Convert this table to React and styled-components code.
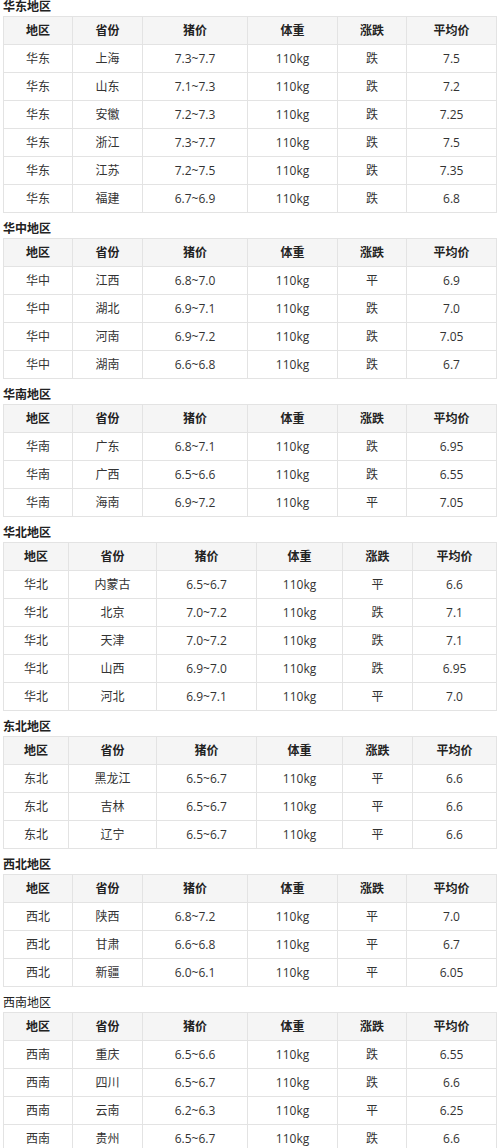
import React from "react";
import styled, { createGlobalStyle } from "styled-components";

const GlobalStyle = createGlobalStyle`
  html, body {
    margin: 0;
    padding: 0;
    background: #fff;
  }
  body {
    font-family: "Open Sans", "Noto Sans CJK SC", sans-serif;
    color: #333;
  }
`;

const Page = styled.div`
  padding: 0 3px;
  width: 494px;
`;

const Section = styled.section`
  margin-top: 9px;

  &:first-child {
    margin-top: 0;
  }
`;

const Heading = styled.h3`
  margin: 0;
  height: 16px;
  line-height: 14px;
  font-size: 12px;
  font-weight: ${(p) => (p.$plain ? 400 : 700)};
  color: #222;
`;

const Table = styled.table`
  width: 494px;
  border-collapse: separate;
  border-spacing: 0;
  table-layout: fixed;
  border-top: 1px solid #e3e3e3;
  border-left: 1px solid #e3e3e3;
  font-size: 12px;
`;

const Col = styled.col`
  width: ${(p) => p.$w}px;
`;

const Th = styled.th`
  padding: 0;
  height: 27px;
  line-height: 27px;
  text-align: center;
  font-weight: 700;
  color: #222;
  background: #f5f5f5;
  border-right: 1px solid #e3e3e3;
  border-bottom: 1px solid #e3e3e3;
`;

const Td = styled.td`
  padding: 0;
  height: 27px;
  line-height: 27px;
  text-align: center;
  color: #333;
  border-right: 1px solid #e3e3e3;
  border-bottom: 1px solid #e3e3e3;
`;

const NARROW = [69, 70, 105, 90, 69, 90];
const WIDE = [65, 88, 100, 86, 70, 84];

const HEAD = ["地区", "省份", "猪价", "体重", "涨跌", "平均价"];

const regions = [
  {
    name: "华东地区",
    cols: NARROW,
    rows: [
      ["华东", "上海", "7.3~7.7", "110kg", "跌", "7.5"],
      ["华东", "山东", "7.1~7.3", "110kg", "跌", "7.2"],
      ["华东", "安徽", "7.2~7.3", "110kg", "跌", "7.25"],
      ["华东", "浙江", "7.3~7.7", "110kg", "跌", "7.5"],
      ["华东", "江苏", "7.2~7.5", "110kg", "跌", "7.35"],
      ["华东", "福建", "6.7~6.9", "110kg", "跌", "6.8"],
    ],
  },
  {
    name: "华中地区",
    cols: NARROW,
    rows: [
      ["华中", "江西", "6.8~7.0", "110kg", "平", "6.9"],
      ["华中", "湖北", "6.9~7.1", "110kg", "跌", "7.0"],
      ["华中", "河南", "6.9~7.2", "110kg", "跌", "7.05"],
      ["华中", "湖南", "6.6~6.8", "110kg", "跌", "6.7"],
    ],
  },
  {
    name: "华南地区",
    cols: NARROW,
    rows: [
      ["华南", "广东", "6.8~7.1", "110kg", "跌", "6.95"],
      ["华南", "广西", "6.5~6.6", "110kg", "跌", "6.55"],
      ["华南", "海南", "6.9~7.2", "110kg", "平", "7.05"],
    ],
  },
  {
    name: "华北地区",
    cols: WIDE,
    rows: [
      ["华北", "内蒙古", "6.5~6.7", "110kg", "平", "6.6"],
      ["华北", "北京", "7.0~7.2", "110kg", "跌", "7.1"],
      ["华北", "天津", "7.0~7.2", "110kg", "跌", "7.1"],
      ["华北", "山西", "6.9~7.0", "110kg", "跌", "6.95"],
      ["华北", "河北", "6.9~7.1", "110kg", "平", "7.0"],
    ],
  },
  {
    name: "东北地区",
    cols: WIDE,
    rows: [
      ["东北", "黑龙江", "6.5~6.7", "110kg", "平", "6.6"],
      ["东北", "吉林", "6.5~6.7", "110kg", "平", "6.6"],
      ["东北", "辽宁", "6.5~6.7", "110kg", "平", "6.6"],
    ],
  },
  {
    name: "西北地区",
    cols: NARROW,
    rows: [
      ["西北", "陕西", "6.8~7.2", "110kg", "平", "7.0"],
      ["西北", "甘肃", "6.6~6.8", "110kg", "平", "6.7"],
      ["西北", "新疆", "6.0~6.1", "110kg", "平", "6.05"],
    ],
  },
  {
    name: "西南地区",
    plain: true,
    cols: NARROW,
    rows: [
      ["西南", "重庆", "6.5~6.6", "110kg", "跌", "6.55"],
      ["西南", "四川", "6.5~6.7", "110kg", "跌", "6.6"],
      ["西南", "云南", "6.2~6.3", "110kg", "平", "6.25"],
      ["西南", "贵州", "6.5~6.7", "110kg", "跌", "6.6"],
    ],
  },
];

export default function App() {
  return (
    <>
      <GlobalStyle />
      <Page>
        {regions.map((r) => (
          <Section key={r.name}>
            <Heading $plain={r.plain}>{r.name}</Heading>
            <Table>
              <colgroup>
                {r.cols.map((w, i) => (
                  <Col key={i} $w={w} />
                ))}
              </colgroup>
              <thead>
                <tr>
                  {HEAD.map((h) => (
                    <Th key={h}>{h}</Th>
                  ))}
                </tr>
              </thead>
              <tbody>
                {r.rows.map((row, i) => (
                  <tr key={i}>
                    {row.map((c, j) => (
                      <Td key={j}>{c}</Td>
                    ))}
                  </tr>
                ))}
              </tbody>
            </Table>
          </Section>
        ))}
      </Page>
    </>
  );
}
